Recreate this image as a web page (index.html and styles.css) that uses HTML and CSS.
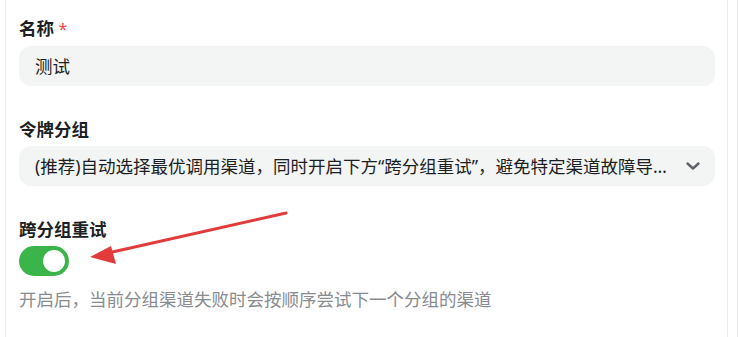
FILE: index.html
```html
<!DOCTYPE html>
<html lang="zh">
<head>
<meta charset="utf-8">
<link rel="stylesheet" href="styles.css">
</head>
<body>
<div class="page">
  <div class="card">
    <div class="field">
      <div class="label">名称 <span class="req">*</span></div>
      <div class="input">测试</div>
    </div>
    <div class="field">
      <div class="label">令牌分组</div>
      <div class="input select">
        <span class="sel-text">(推荐)自动选择最优调用渠道，同时开启下方“跨分组重试”，避免特定渠道故障导致请求失败的问题</span>
        <svg class="chev" width="16" height="16" viewBox="0 0 16 16"><path d="M2.5 5.5 L8 10.5 L13.5 5.5" fill="none" stroke="#5f6368" stroke-width="2.4" stroke-linecap="round" stroke-linejoin="round"/></svg>
      </div>
    </div>
    <div class="field">
      <div class="label">跨分组重试</div>
      <div class="switch"><span class="knob"></span></div>
      <div class="help">开启后，当前分组渠道失败时会按顺序尝试下一个分组的渠道</div>
    </div>
  </div>
  <div class="side"></div>
  <svg class="arrow" width="739" height="337" viewBox="0 0 739 337">
    <line x1="286" y1="213" x2="108" y2="253" stroke="#e23b3c" stroke-width="3" stroke-linecap="round"/>
    <polygon points="90,257 111,246 116,264" fill="#e23b3c"/>
  </svg>
</div>
</body>
</html>
```
FILE: styles.css
```css
* { box-sizing: border-box; }
html, body { margin: 0; padding: 0; background: #fff; }
body {
  font-family: "Noto Sans", "Noto Sans CJK SC", sans-serif;
  color: #1c1f23;
  width: 739px;
  height: 337px;
  overflow: hidden;
}
.page {
  position: relative;
  display: flex;
  height: 337px;
  padding-left: 5px;
}
.card {
  width: 723px;
  height: 337px;
  border-left: 1px solid #ececec;
  border-right: 1px solid #ececec;
  padding: 16px 12px 0 13px;
  display: flex;
  flex-direction: column;
  gap: 31px;
}
.side {
  width: 10px;
  border-right: 1px solid #e6e6e6;
  height: 337px;
}
.field { display: flex; flex-direction: column; }
.label {
  font-size: 17.5px;
  font-weight: 700;
  line-height: 24px;
  margin-bottom: 5px;
  color: #1c1f23;
}
.req { color: #f0443c; font-weight: 400; font-size: 16px; }
.input {
  height: 40px;
  border-radius: 12px;
  background: #f3f4f4;
  padding: 0 16px;
  font-size: 17.5px;
  line-height: 40px;
  color: #1c1f23;
  display: flex;
  align-items: center;
}
.select { padding-right: 12px; }
.sel-text {
  flex: 1;
  min-width: 0;
  white-space: nowrap;
  overflow: hidden;
  text-overflow: ellipsis;
  padding-right: 14px;
}
.chev { flex: none; margin-right: 2px; }
.switch {
  width: 50px;
  height: 30px;
  border-radius: 15px;
  background: #3bb449;
  position: relative;
}
.knob {
  position: absolute;
  right: 4px;
  top: 4px;
  width: 22px;
  height: 22px;
  border-radius: 50%;
  background: #fff;
}
.help {
  margin-top: 11px;
  font-size: 17.5px;
  line-height: 24px;
  color: #888b8f;
}
.arrow { position: absolute; left: 0; top: 0; pointer-events: none; }
```
